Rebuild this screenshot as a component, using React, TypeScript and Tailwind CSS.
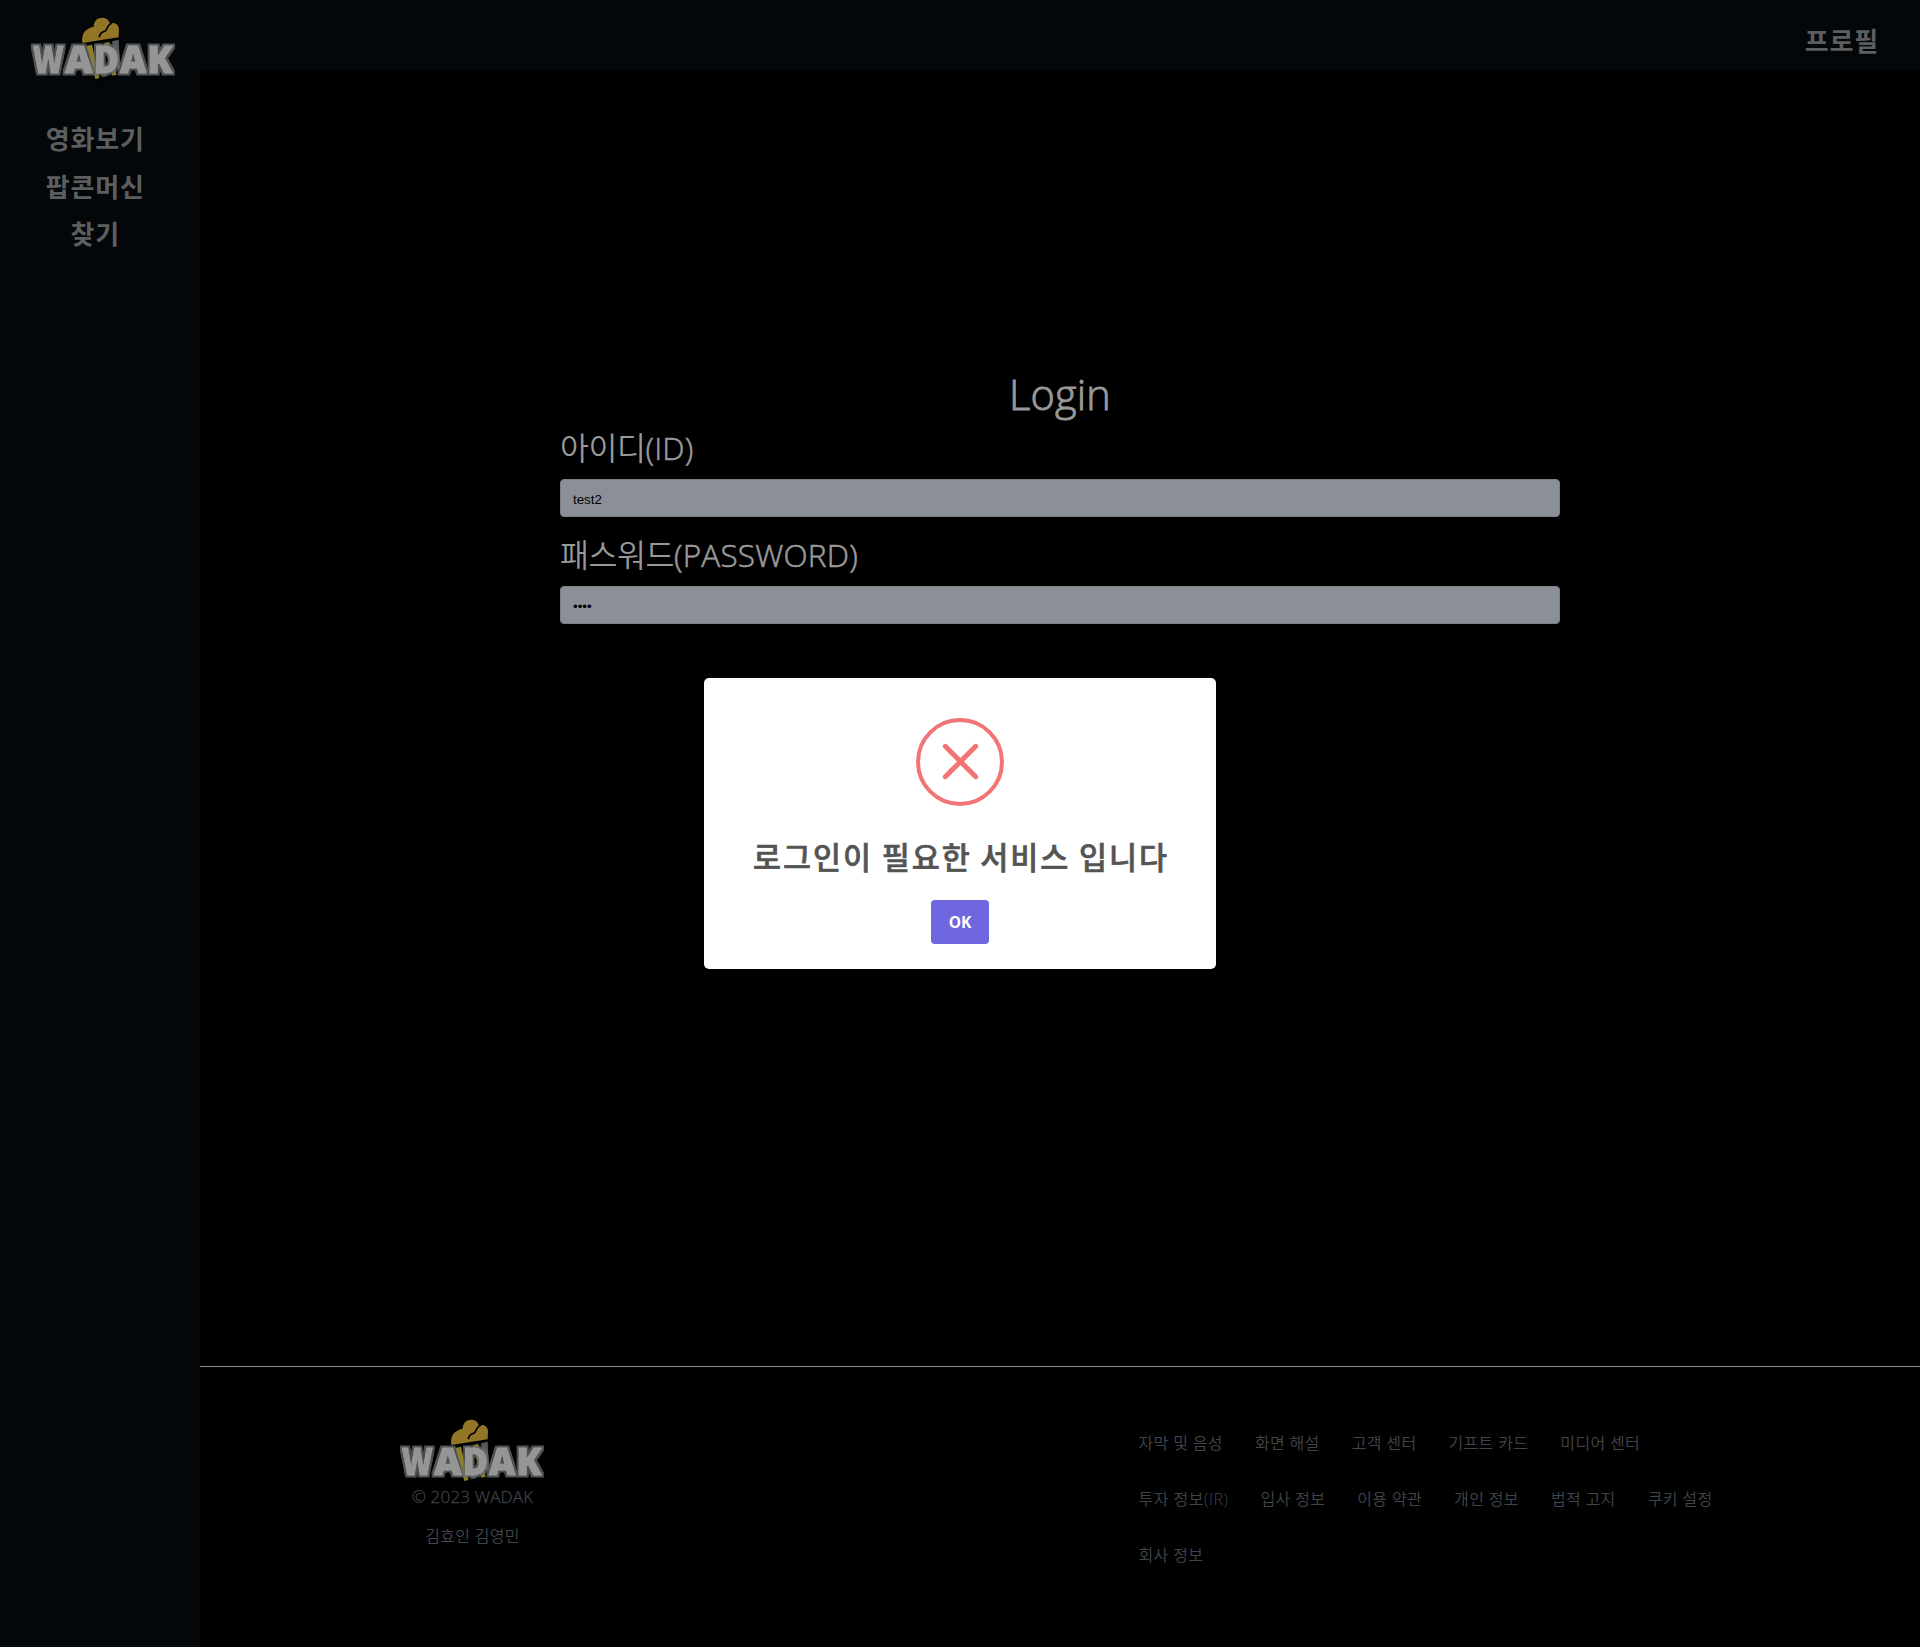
import React from "react";

const KR = "font-['Open_Sans','Noto_Sans_CJK_KR',sans-serif]";
const KR_ONLY = "font-['Noto_Sans_CJK_KR',sans-serif]";

const letters = [
  { c: "W", x: 38, w: 93 },
  { c: "A", x: 135, w: 83 },
  { c: "D", x: 221, w: 76 },
  { c: "A", x: 300, w: 79 },
  { c: "K", x: 382, w: 76 },
];

function Logo() {
  return (
    <svg viewBox="30 30 440 205" className="block h-[68.3px] w-[146.7px]" aria-label="WADAK">
      <defs>
        <filter id="halo" x="-10%" y="-20%" width="120%" height="140%">
          <feMorphology in="SourceAlpha" operator="dilate" radius="5" result="grown" />
          <feGaussianBlur in="grown" stdDeviation="2" result="soft" />
          <feFlood floodColor="#66676a" floodOpacity="0.8" />
          <feComposite in2="soft" operator="in" result="glow" />
          <feMerge>
            <feMergeNode in="glow" />
            <feMergeNode in="SourceGraphic" />
          </feMerge>
        </filter>
      </defs>
      <path d="M186 117 L298 96 L304 218 L222 232 Z" fill="#020304" />
      <path
        d="M187 114 C184 93 191 77 205 71 C211 67 217 66 221 65 C221 48 232 38 247 38 C259 38 267 45 270 56 C283 50 297 58 297 73 L296 97 Z"
        fill="#937527"
        stroke="#000"
        strokeWidth="7"
        paintOrder="stroke"
      />
      <path d="M238 95 C240 82 248 82 257 77 C262 72 261 62 274 55" fill="none" stroke="#020304" strokeWidth="5" strokeLinecap="round" />
      <path d="M199 123 L216 119 L238 219 L226 222 Z" fill="#8f7f25" />
      <path d="M226 118 L242 115 L262 214 L246 217 Z" fill="#4e4f52" />
      <path d="M252 114 L268 111 L290 209 L277 212 Z" fill="#8f7f25" />
      <path d="M276 109 L296 104 L300 190 L290 192 Z" fill="#57585c" />
      <g
        className="font-['Open_Sans',sans-serif]"
        fontWeight="800"
        fontSize="110"
        fill="#999"
        fillOpacity="0.95"
        stroke="#999"
        strokeWidth="2.5"
        strokeLinejoin="round"
        filter="url(#halo)"
      >
        {letters.map((l) => (
          <text key={l.x} x={l.x} y="205" textLength={l.w} lengthAdjust="spacingAndGlyphs">{l.c}</text>
        ))}
      </g>
    </svg>
  );
}

const menu = ["영화보기", "팝콘머신", "찾기"];

const links = [
  ["자막 및 음성", "화면 해설", "고객 센터", "기프트 카드", "미디어 센터"],
  ["투자 정보(IR)", "입사 정보", "이용 약관", "개인 정보", "법적 고지", "쿠키 설정"],
  ["회사 정보"],
];

const inputClass =
  "mt-[5px] block h-[38px] w-full rounded border border-[#7c7f83] bg-[#8b9098] px-3 pt-[2px] text-[13.333px] text-black outline-none font-['Liberation_Sans',sans-serif]";

function Sidebar() {
  return (
    <aside className="flex w-[200px] shrink-0 flex-col bg-[#03070a] pt-[14.5px]">
      <div className="pl-[30px]">
        <Logo />
      </div>
      <nav className={`mt-[31.5px] flex w-[190.5px] flex-col items-center text-[26px] font-bold text-[#5c5e60] ${KR_ONLY}`}>
        {menu.map((m) => (
          <a key={m} className="flex h-[47.5px] items-center leading-none tracking-[0.8px]">{m}</a>
        ))}
      </nav>
    </aside>
  );
}

function FieldLabel({ ko, en }: { ko: string; en: string }) {
  return (
    <label className="flex h-[50px] items-center text-[31.5px] font-[350] leading-none">
      <span className="tracking-[-0.5px]">{ko}</span>
      <span className="tracking-[0.2px] [-webkit-text-stroke:0.6px_#999]">({en})</span>
    </label>
  );
}

function LoginForm() {
  return (
    <form className={`mx-auto flex w-[1000px] flex-col text-[#999] ${KR}`}>
      <h1 className="mt-[296px] flex h-[57px] items-center justify-center text-[41.5px] font-light leading-none tracking-[0.2px] [-webkit-text-stroke:0.9px_#999]">
        Login
      </h1>
      <FieldLabel ko="아이디" en="ID" />
      <input className={`${inputClass} mt-[6px]`} defaultValue="test2" />
      <div className="mt-[13px]">
        <FieldLabel ko="패스워드" en="PASSWORD" />
      </div>
      <input type="password" className={`${inputClass} mt-[6px]`} defaultValue="1234" />
    </form>
  );
}

function Footer() {
  return (
    <footer className={`flex h-[281px] border-t border-[#8c8c8c] text-[16px] font-[350] text-[#41464b] ${KR}`}>
      <div className="ml-[199px] flex w-[147px] flex-col items-center pt-[50px]">
        <Logo />
        <p className="flex h-[22px] items-center whitespace-nowrap text-[17px] leading-none tracking-[0.2px] [-webkit-text-stroke:0.25px_#41464b]">
          © 2023 WADAK
        </p>
        <p className="mt-[17px] flex h-[24px] items-center whitespace-nowrap leading-none tracking-[0.3px]">김효인 김영민</p>
      </div>
      <div className="ml-[592.5px] flex flex-col pt-[47.5px]">
        {links.map((row, i) => (
          <div key={i} className="flex h-[56px] items-center gap-8 whitespace-nowrap leading-none tracking-[0.35px]">
            {row.map((l) => (
              <a key={l} className={l.endsWith(")") ? "w-[90px] tracking-[0.5px]" : ""}>{l}</a>
            ))}
          </div>
        ))}
      </div>
    </footer>
  );
}

function Alert() {
  return (
    <div className="absolute inset-0 flex items-center justify-center">
      <div className="flex h-[291px] w-[512px] flex-col items-center rounded-[5px] bg-white pt-[40px]">
        <svg viewBox="0 0 88 88" className="size-[88px] shrink-0" fill="none" stroke="#f27474">
          <circle cx="44" cy="44" r="42" strokeWidth="4" />
          <path d="M29.3 28.3 L59.7 58.7 M59.7 28.3 L29.3 58.7" strokeWidth="5" strokeLinecap="round" />
        </svg>
        <h2 className={`mt-[31px] flex h-[38px] items-center whitespace-nowrap pl-[2px] text-[30.5px] font-medium leading-none tracking-[1.9px] text-[#545454] [-webkit-text-stroke:0.6px_#545454] ${KR_ONLY}`}>
          로그인이 필요한 서비스 입니다
        </h2>
        <button className="mt-[25px] h-[44px] w-[58px] rounded bg-[#7066e0] pt-[2px] text-[15.5px] font-bold text-white font-['Open_Sans',sans-serif]">
          OK
        </button>
      </div>
    </div>
  );
}

export default function App() {
  return (
    <div className="relative flex h-[1647px] w-[1920px] overflow-hidden bg-black">
      <Sidebar />
      <div className="flex flex-1 flex-col">
        <header className="flex h-[70px] shrink-0 items-center justify-end bg-[#03070a] pr-[41px] pt-[10px]">
          <a className={`text-[26px] font-bold leading-none tracking-[0.8px] text-[#5c5e60] ${KR_ONLY}`}>프로필</a>
        </header>
        <main className="flex-1">
          <LoginForm />
        </main>
        <Footer />
      </div>
      <Alert />
    </div>
  );
}
